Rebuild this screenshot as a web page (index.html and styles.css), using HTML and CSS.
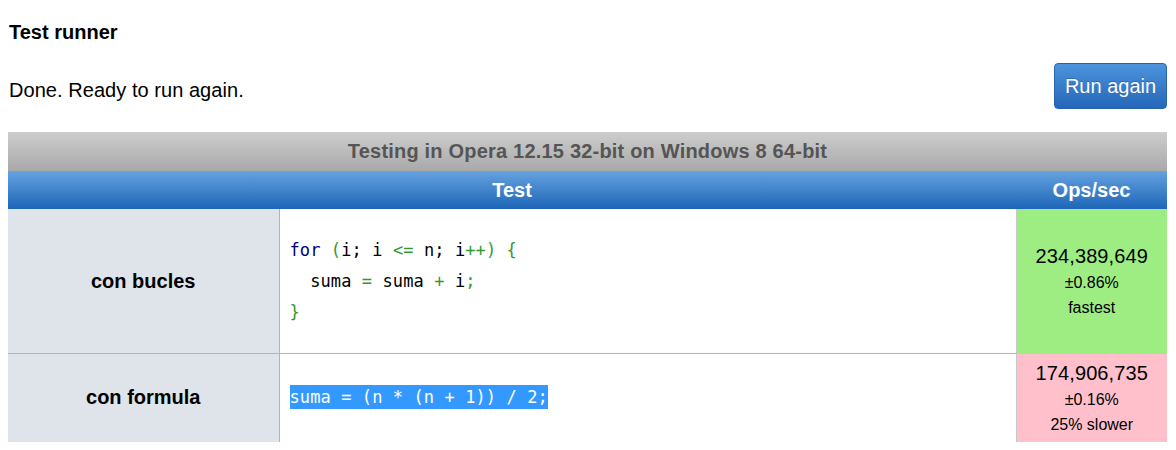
FILE: index.html
```html
<!DOCTYPE html>
<html>
<head>
<meta charset="utf-8">
<link rel="stylesheet" href="styles.css">
</head>
<body>
<div class="page">
  <h1 class="title">Test runner</h1>
  <div class="status-row">
    <p class="status">Done. Ready to run again.</p>
    <button class="run-btn">Run again</button>
  </div>
  <table class="results">
    <colgroup>
      <col class="c-name">
      <col class="c-code">
      <col class="c-ops">
    </colgroup>
    <thead>
      <tr><th colspan="3" class="ua">Testing in Opera 12.15 32-bit on Windows 8 64-bit</th></tr>
      <tr class="heads"><th colspan="2">Test</th><th>Ops/sec</th></tr>
    </thead>
    <tbody>
      <tr class="r1">
        <th class="name">con bucles</th>
        <td class="code"><pre><span class="kw">for</span> <span class="pn">(</span>i; i <span class="pn">&lt;=</span> n; i<span class="pn">++)</span> <span class="pn">{</span>
  suma <span class="pn">=</span> suma <span class="pn">+</span> i<span class="pn">;</span>
<span class="pn">}</span></pre></td>
        <td class="ops fast"><div class="num">234,389,649</div><div class="sub">±0.86%</div><div class="sub">fastest</div></td>
      </tr>
      <tr class="r2">
        <th class="name">con formula</th>
        <td class="code"><pre><span class="sel">suma = (n * (n + 1)) / 2;</span></pre></td>
        <td class="ops slow"><div class="num">174,906,735</div><div class="sub">±0.16%</div><div class="sub">25% slower</div></td>
      </tr>
    </tbody>
  </table>
</div>
</body>
</html>
```
FILE: styles.css
```css
html, body {
  margin: 0;
  padding: 0;
  background: #fff;
}
.page {
  padding: 21px 9px 0 8px;
  font-family: "Liberation Sans", Arial, sans-serif;
  color: #000;
}
.title {
  margin: 0 0 0 1px;
  font-size: 20px;
  line-height: 23px;
  font-weight: bold;
}
.status-row {
  display: flex;
  justify-content: space-between;
  align-items: flex-start;
  margin-top: 19px;
  height: 46px;
}
.status {
  margin: 16px 0 0 1px;
  font-size: 20px;
  line-height: 23px;
  letter-spacing: 0.05px;
}
.run-btn {
  width: 113px;
  height: 46px;
  border: 1px solid #2a64a8;
  border-radius: 4px;
  background: linear-gradient(#4d93dc, #2467b9);
  color: #fff;
  font-family: "Liberation Sans", Arial, sans-serif;
  font-size: 20px;
  padding: 0;
  text-shadow: 0 -1px 0 rgba(0,0,0,0.2);
}
.results {
  margin-top: 23px;
  width: 100%;
  table-layout: fixed;
  border-collapse: collapse;
  border-spacing: 0;
}
.c-name { width: 271px; }
.c-ops { width: 151px; }
.results th, .results td {
  padding: 0;
}
.ua {
  height: 39px;
  background: linear-gradient(#cdcdcd, #a9a9a9);
  color: #555;
  font-size: 20px;
  font-weight: bold;
  letter-spacing: 0.2px;
  text-align: center;
  vertical-align: middle;
}
.heads th {
  height: 38px;
  background: linear-gradient(#65a2e0, #1d66b7);
  color: #fff;
  font-size: 20px;
  font-weight: bold;
  text-align: center;
  vertical-align: middle;
}
.name {
  background: #dee4ea;
  border-right: 1px solid #b4b4b4;
  font-size: 20px;
  font-weight: bold;
  text-align: center;
  vertical-align: middle;
}
.r1 .name, .r1 .code {
  border-bottom: 1px solid #b4b4b4;
}
.r1 td, .r1 th { height: 144px; }
.r2 td, .r2 th { height: 78px; }
.code {
  padding-left: 10px !important;
  vertical-align: middle;
  background: #fff;
}
.code pre {
  margin: 0;
  font-family: "DejaVu Sans Mono", "Liberation Mono", monospace;
  font-size: 17px;
  line-height: 31px;
  letter-spacing: 0.1px;
  color: #000;
}
.kw { color: #000080; }
.pn { color: #339933; }
.sel {
  background: #3399ff;
  color: #fff;
  padding: 2px 0;
}
.ops {
  text-align: center;
  vertical-align: middle;
  border-left: 1px solid #c8c8c8;
}
.fast { background: #9ded83; }
.slow { background: #ffc0cb; padding-top: 5px !important; padding-bottom: 5px !important; }
.num {
  font-size: 20px;
  line-height: 28px;
  letter-spacing: 0.1px;
}
.sub {
  font-size: 16px;
  line-height: 25px;
}
```
